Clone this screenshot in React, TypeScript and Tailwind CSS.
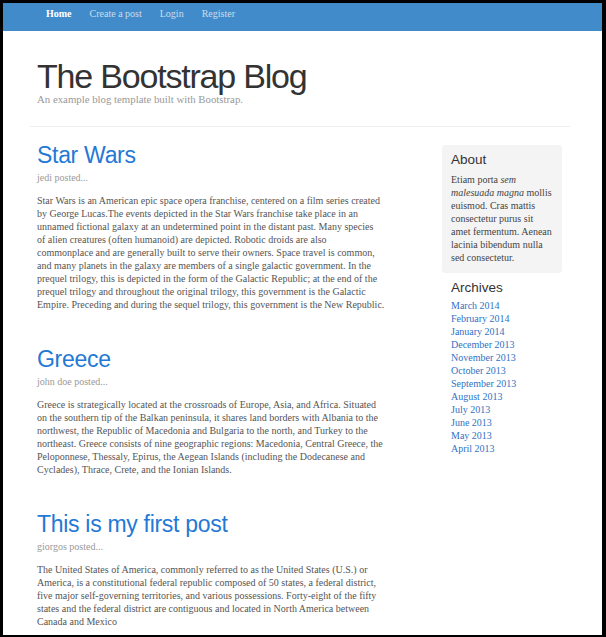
const serif = "font-['Liberation_Serif','Times_New_Roman',serif]";
const sans = "font-['Liberation_Sans',Arial,sans-serif]";

// lines are broken where the original page breaks them
const posts = [
  {
    title: "Star Wars",
    author: "jedi",
    lines: [
      "Star Wars is an American epic space opera franchise, centered on a film series created",
      "by George Lucas.The events depicted in the Star Wars franchise take place in an",
      "unnamed fictional galaxy at an undetermined point in the distant past. Many species",
      "of alien creatures (often humanoid) are depicted. Robotic droids are also",
      "commonplace and are generally built to serve their owners. Space travel is common,",
      "and many planets in the galaxy are members of a single galactic government. In the",
      "prequel trilogy, this is depicted in the form of the Galactic Republic; at the end of the",
      "prequel trilogy and throughout the original trilogy, this government is the Galactic",
      "Empire. Preceding and during the sequel trilogy, this government is the New Republic.",
    ],
  },
  {
    title: "Greece",
    author: "john doe",
    lines: [
      "Greece is strategically located at the crossroads of Europe, Asia, and Africa. Situated",
      "on the southern tip of the Balkan peninsula, it shares land borders with Albania to the",
      "northwest, the Republic of Macedonia and Bulgaria to the north, and Turkey to the",
      "northeast. Greece consists of nine geographic regions: Macedonia, Central Greece, the",
      "Peloponnese, Thessaly, Epirus, the Aegean Islands (including the Dodecanese and",
      "Cyclades), Thrace, Crete, and the Ionian Islands.",
    ],
  },
  {
    title: "This is my first post",
    author: "giorgos",
    lines: [
      "The United States of America, commonly referred to as the United States (U.S.) or",
      "America, is a constitutional federal republic composed of 50 states, a federal district,",
      "five major self-governing territories, and various possessions. Forty-eight of the fifty",
      "states and the federal district are contiguous and located in North America between",
      "Canada and Mexico",
    ],
  },
];

const archives = [
  "March 2014",
  "February 2014",
  "January 2014",
  "December 2013",
  "November 2013",
  "October 2013",
  "September 2013",
  "August 2013",
  "July 2013",
  "June 2013",
  "May 2013",
  "April 2013",
];

export default function App() {
  return (
    <div className="h-[637px] w-[606px] bg-black pt-[3px] pl-[3px] pr-[4px] pb-[2px]">
      <div className={`h-full overflow-hidden bg-white ${serif}`}>
        {/* Masthead */}
        <nav className="flex h-[28px] bg-[#428bca] pl-[34px] text-[10px] leading-[22px]">
          <a href="/" className="relative px-[9px] font-bold text-white">
            Home
            <span className="absolute bottom-[-6px] left-1/2 -translate-x-1/2 border-x-[3px] border-b-[3px] border-x-transparent border-b-white" />
          </a>
          <a href="/" className="px-[9px] text-[#cdddeb]">
            Create a post
          </a>
          <a href="/" className="px-[9px] text-[#cdddeb]">
            Login
          </a>
          <a href="/" className="px-[9px] text-[#cdddeb]">
            Register
          </a>
        </nav>

        <div className="ml-[27px] w-[540px]">
          {/* Header */}
          <div className="pl-[7px] pt-[30px]">
            <h1 className={`${sans} text-[34px] leading-[30px] tracking-[-1.2px] text-[#333]`}>
              The Bootstrap Blog
            </h1>
            <p className="mt-[2px] text-[10.8px] leading-[13px] text-[#999]">
              An example blog template built with Bootstrap.
            </p>
          </div>
          <div className="mt-[20px] border-t border-[#eee]" />

          <div className="flex">
            {/* Posts */}
            <div className="w-[352px] pl-[7px] pt-[15px]">
              {posts.map((p) => (
                <div key={p.title} className="mb-[35px]">
                  <h2 className={`${sans} mb-[3px] text-[23px] leading-[26px] tracking-[-0.3px] text-[#2379d5]`}>
                    {p.title}
                  </h2>
                  <p className="mb-[10px] text-[10px] leading-[13px] text-[#999]">
                    {p.author} posted...
                  </p>
                  <p className="whitespace-nowrap text-[10px] leading-[13px] text-[#555]">
                    {p.lines.map((l, i) => (
                      <span key={i}>
                        {l}
                        {i < p.lines.length - 1 && <br />}
                      </span>
                    ))}
                  </p>
                </div>
              ))}
            </div>

            {/* Sidebar */}
            <div className="ml-[60px] w-[120px] pt-[18px]">
              <div className="rounded-[3px] bg-[#f4f4f4] px-[9px] pt-[7px] pb-[9px]">
                <h4 className={`${sans} mb-[5px] text-[13.5px] leading-[16px] text-[#333]`}>
                  About
                </h4>
                <p className="text-[10px] leading-[13px] text-[#444]">
                  Etiam porta <em>sem malesuada magna</em> mollis euismod. Cras mattis
                  consectetur purus sit amet fermentum. Aenean lacinia bibendum nulla sed
                  consectetur.
                </p>
              </div>
              <div className="px-[9px] pt-[7px]">
                <h4 className={`${sans} mb-[3px] text-[13.5px] leading-[16px] text-[#333]`}>
                  Archives
                </h4>
                <ul>
                  {archives.map((a) => (
                    <li key={a} className="text-[10px] leading-[13px]">
                      <a href="/" className="text-[#2f72c4]">
                        {a}
                      </a>
                    </li>
                  ))}
                </ul>
              </div>
            </div>
          </div>
        </div>
      </div>
    </div>
  );
}
